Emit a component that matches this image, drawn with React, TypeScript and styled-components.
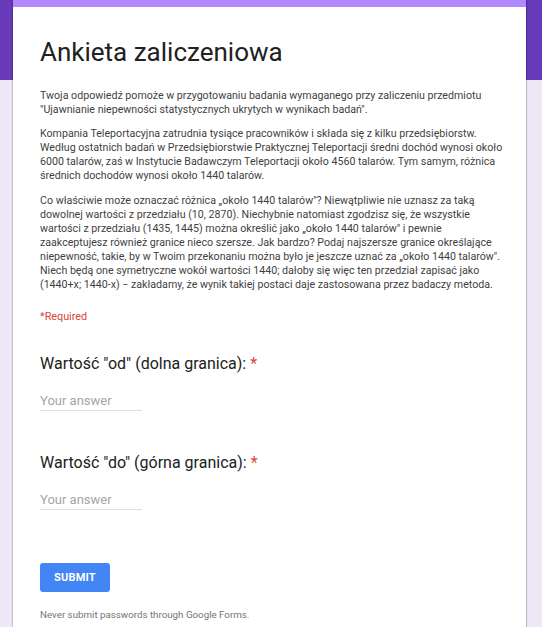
import React from "react";
import styled, { createGlobalStyle } from "styled-components";

const Global = createGlobalStyle`
  html, body { margin: 0; padding: 0; }
  body { font-family: Roboto, "Noto Sans", Arial, sans-serif; }
`;

const Page = styled.div`
  min-height: 100vh;
  background: linear-gradient(to bottom, #673ab7 0, #673ab7 80px, #ede7f6 80px);
  overflow: hidden;
`;

const Card = styled.main`
  margin-left: 13px;
  width: 513px;
  box-sizing: border-box;
  min-height: 640px;
  background: #fff;
  border-top: 7px solid #b388fe;
  box-shadow: 0 2px 2px rgba(0, 0, 0, 0.2), 0 0 1px 1px rgba(0, 0, 0, 0.12);
  padding: 29px 10px 20px 27px;
`;

const Title = styled.h1`
  margin: 0;
  font-size: 26px;
  line-height: 32px;
  font-weight: 400;
  color: #212121;
`;

const Description = styled.div`
  margin-top: 21px;
  font-size: 10.65px;
  line-height: 14.1px;
  color: #3f3f3f;
`;

const Para = styled.p`
  margin: 0 0 10px 0;
  &:last-child { margin-bottom: 0; }
`;

const Line = styled.span`
  display: block;
  white-space: nowrap;
`;

const Required = styled.div`
  margin-top: 18px;
  font-size: 10.8px;
  line-height: 14px;
  color: #db4437;
`;

const Question = styled.section<{ $first?: boolean }>`
  margin-top: ${(p) => (p.$first ? "28px" : "40px")};
  display: flex;
  flex-direction: column;
  align-items: flex-start;
`;

const QTitle = styled.div`
  font-size: 16px;
  line-height: 24px;
  color: #212121;
`;

const Star = styled.span`
  color: #db4437;
`;

const Answer = styled.input`
  margin-top: 14px;
  width: 102px;
  box-sizing: border-box;
  height: 21px;
  padding: 0;
  border: none;
  border-bottom: 1px solid #e0e0e0;
  font-family: inherit;
  font-size: 13px;
  line-height: 20px;
  color: #212121;
  outline: none;
  background: transparent;
  &::placeholder { color: #a6a6a6; }
`;

const Submit = styled.button`
  margin-top: 53px;
  width: 70px;
  height: 29px;
  border: none;
  border-radius: 3px;
  background: #4285f4;
  color: #fff;
  font-family: inherit;
  font-size: 11px;
  font-weight: 700;
  letter-spacing: 0.2px;
  padding: 0;
  display: block;
`;

const Note = styled.div`
  margin-top: 16px;
  font-size: 9.75px;
  line-height: 14px;
  color: #757575;
`;

const paragraphs: string[][] = [
  [
    "Twoja odpowiedź pomoże w przygotowaniu badania wymaganego przy zaliczeniu przedmiotu",
    "\"Ujawnianie niepewności statystycznych ukrytych w wynikach badań\".",
  ],
  [
    "Kompania Teleportacyjna zatrudnia tysiące pracowników i składa się z kilku przedsiębiorstw.",
    "Według ostatnich badań w Przedsiębiorstwie Praktycznej Teleportacji średni dochód wynosi około",
    "6000 talarów, zaś w Instytucie Badawczym Teleportacji około 4560 talarów. Tym samym, różnica",
    "średnich dochodów wynosi około 1440 talarów.",
  ],
  [
    "Co właściwie może oznaczać różnica „około 1440 talarów\"? Niewątpliwie nie uznasz za taką",
    "dowolnej wartości z przedziału (10, 2870). Niechybnie natomiast zgodzisz się, że wszystkie",
    "wartości z przedziału (1435, 1445) można określić jako „około 1440 talarów\" i pewnie",
    "zaakceptujesz również granice nieco szersze. Jak bardzo? Podaj najszersze granice określające",
    "niepewność, takie, by w Twoim przekonaniu można było je jeszcze uznać za „około 1440 talarów\".",
    "Niech będą one symetryczne wokół wartości 1440; dałoby się więc ten przedział zapisać jako",
    "(1440+x; 1440-x) − zakładamy, że wynik takiej postaci daje zastosowana przez badaczy metoda.",
  ],
];

export default function App() {
  return (
    <Page>
      <Global />
      <Card>
        <Title>Ankieta zaliczeniowa</Title>
        <Description>
          {paragraphs.map((lines, i) => (
            <Para key={i}>
              {lines.map((l, j) => (
                <Line key={j}>{l}</Line>
              ))}
            </Para>
          ))}
        </Description>
        <Required>*Required</Required>
        <Question $first>
          <QTitle>
            Wartość "od" (dolna granica): <Star>*</Star>
          </QTitle>
          <Answer placeholder="Your answer" />
        </Question>
        <Question>
          <QTitle>
            Wartość "do" (górna granica): <Star>*</Star>
          </QTitle>
          <Answer placeholder="Your answer" />
        </Question>
        <Submit>SUBMIT</Submit>
        <Note>Never submit passwords through Google Forms.</Note>
      </Card>
    </Page>
  );
}
